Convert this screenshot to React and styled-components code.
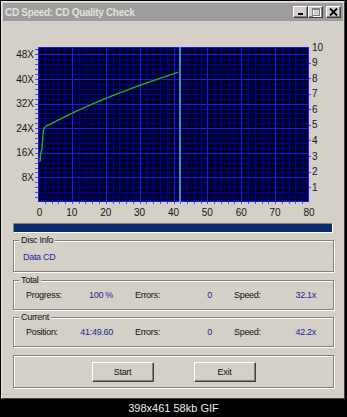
import React from "react";
import styled, { createGlobalStyle } from "styled-components";

const GlobalStyle = createGlobalStyle`
  html, body {
    margin: 0;
    padding: 0;
    background: #000;
  }
  body {
    width: 347px;
    height: 417px;
    overflow: hidden;
    font-family: "Liberation Sans", Arial, sans-serif;
  }
`;

const Screen = styled.div`
  width: 347px;
  height: 417px;
  background: #000;
  display: flex;
  flex-direction: column;
`;

const Window = styled.div`
  margin: 1px 0 0 1px;
  width: 344px;
  height: 398px;
  box-sizing: border-box;
  background: #d4d0c8;
  border: 1px solid;
  border-color: #e6e4de #404040 #404040 #e6e4de;
  padding: 1px;
  display: flex;
  flex-direction: column;
`;

const TitleBar = styled.div`
  height: 18px;
  flex: none;
  background: #9d9d9d;
  display: flex;
  align-items: center;
  padding: 0 2px;
`;

const Title = styled.div`
  flex: 1;
  font-size: 10px;
  font-weight: bold;
  letter-spacing: -0.3px;
  color: #e2e0da;
  white-space: nowrap;
`;

const TitleBtn = styled.div`
  width: 15px;
  height: 12px;
  box-sizing: border-box;
  background: #d4d0c8;
  border: 1px solid;
  border-color: #fff #404040 #404040 #fff;
  box-shadow: inset -1px -1px #808080;
  margin-left: ${p => p.$gap || 0}px;
  svg {
    display: block;
  }
`;

const Body = styled.div`
  flex: 1;
  padding: 17px 9px 0 10px;
  display: flex;
  flex-direction: column;
`;

const ChartSvg = styled.svg`
  display: block;
  flex: none;
`;

const Progress = styled.div`
  margin-top: 3px;
  width: 320px;
  height: 10px;
  box-sizing: border-box;
  border: 1px solid;
  border-color: #808080 #fff #fff #808080;
  background: #d4d0c8;
`;

const ProgressFill = styled.div`
  height: 100%;
  background: #0c2a6e;
`;

const Group = styled.fieldset`
  margin: ${p => p.$mt}px 0 0;
  padding: ${p => p.$pad};
  width: 321px;
  min-width: 0;
  box-sizing: border-box;
  border: 1px solid #808080;
  box-shadow: inset 1px 1px #fff, 1px 1px #fff;
`;

const Legend = styled.legend`
  margin-left: 5px;
  padding: 0 2px;
  font-size: 9px;
  line-height: 12px;
  letter-spacing: -0.3px;
  color: #111;
  background: #d4d0c8;
`;

const InfoLine = styled.div`
  padding-left: 9px;
  font-size: 9px;
  line-height: 12px;
  letter-spacing: -0.3px;
  color: #23239b;
`;

const StatsRow = styled.div`
  padding: 3px 0 0 12px;
  display: grid;
  grid-template-columns: 87px 77px 82px;
  column-gap: 22px;
  font-size: 9px;
  line-height: 12px;
  letter-spacing: -0.3px;
`;

const Stat = styled.div`
  display: flex;
  justify-content: space-between;
  white-space: nowrap;
`;

const StatLabel = styled.span`
  color: #111;
`;

const StatValue = styled.span`
  color: #23239b;
`;

const ButtonRow = styled.div`
  display: flex;
  justify-content: center;
  gap: 40px;
`;

const Button = styled.div`
  width: 62px;
  height: 20px;
  box-sizing: border-box;
  border: 1px solid;
  border-color: #fff #404040 #404040 #fff;
  box-shadow: inset -1px -1px #808080;
  display: flex;
  align-items: center;
  justify-content: center;
  font-size: 9px;
  letter-spacing: -0.3px;
  color: #111;
`;

const Caption = styled.div`
  flex: 1;
  padding-top: 1px;
  text-align: center;
  font-size: 11px;
  line-height: 17px;
  color: #ececec;
`;

const CW = 271;
const CH = 155;
const X0 = 25;
const Y0 = 9;
const xOf = t => X0 + (t * CW) / 80;
const yOf = v => Y0 + CH - (v * CH) / 50.4;
const px = n => Math.round(n) + 0.5;

const ramp = [
  [0.59, 13],
  [0.8, 15.8],
  [1.09, 16.8],
  [1.38, 20],
  [1.56, 23.3],
  [2.0, 24.3],
  [2.6, 24.9],
];

function curvePoints() {
  const pts = ramp.map(([t, v]) => [t, v]);
  for (let t = 3.5; t <= 41.4; t += 0.5) {
    pts.push([t, Math.sqrt(529 + 30.24 * t)]);
  }
  pts.push([41.4, 42.2]);
  return pts.map(([t, v]) => `${xOf(t).toFixed(1)},${yOf(v).toFixed(1)}`).join(" ");
}

function Chart() {
  const minorX = [];
  const majorX = [];
  for (let t = 2; t < 80; t += 2) (t % 10 === 0 ? majorX : minorX).push(t);
  const minorY = [];
  const majorY = [];
  for (let i = 1; i * 1.6 < 50.4; i++) (i % 5 === 0 ? majorY : minorY).push(i * 1.6);

  return (
    <ChartSvg width="321" height="182" viewBox="0 0 321 182">
      <rect x={X0} y={Y0} width={CW} height={CH} fill="#000024" />
      <g stroke="#000092" strokeWidth="1" shapeRendering="crispEdges">
        {minorX.map(t => (
          <line key={"mx" + t} x1={px(xOf(t))} x2={px(xOf(t))} y1={Y0} y2={Y0 + CH} />
        ))}
        {minorY.map(v => (
          <line key={"my" + v} x1={X0} x2={X0 + CW} y1={px(yOf(v))} y2={px(yOf(v))} />
        ))}
      </g>
      <g stroke="#1818f0" strokeWidth="1" shapeRendering="crispEdges">
        {majorX.map(t => (
          <line key={"Mx" + t} x1={px(xOf(t))} x2={px(xOf(t))} y1={Y0} y2={Y0 + CH} />
        ))}
        {majorY.map(v => (
          <line key={"My" + v} x1={X0} x2={X0 + CW} y1={px(yOf(v))} y2={px(yOf(v))} />
        ))}
        <rect x={X0 + 0.5} y={Y0 + 0.5} width={CW - 1} height={CH - 1} fill="none" />
      </g>
      <g stroke="#4a4aff" strokeWidth="1" shapeRendering="crispEdges">
        {[...minorY, ...majorY].map(v => (
          <line key={"tl" + v} x1={X0 - 3} x2={X0} y1={px(yOf(v))} y2={px(yOf(v))} />
        ))}
        {[...minorX, ...majorX].map(t => (
          <line key={"tb" + t} x1={px(xOf(t))} x2={px(xOf(t))} y1={Y0 + CH} y2={Y0 + CH + 2} />
        ))}
        {[1, 2, 3, 4, 5, 6, 7, 8, 9].map(n => (
          <line key={"tr" + n} x1={X0 + CW} x2={X0 + CW + 2} y1={px(164.6 - 15.55 * n)} y2={px(164.6 - 15.55 * n)} />
        ))}
      </g>
      <line x1={xOf(41.9)} x2={xOf(41.9)} y1={Y0} y2={Y0 + CH} stroke="#3c9fd0" strokeWidth="1.8" />
      <polyline points={curvePoints()} fill="none" stroke="#1fb41f" strokeWidth="1.4" />
      <g fontFamily="Liberation Sans, Arial, sans-serif" fontSize="10" fill="#151515">
        {[8, 16, 24, 32, 40, 48].map(v => (
          <text key={"yl" + v} x={21} y={yOf(v) + 3.6} textAnchor="end">
            {v}X
          </text>
        ))}
        {[1, 2, 3, 4, 5, 6, 7, 8, 9, 10].map(n => (
          <text key={"yr" + n} x={299} y={164.6 - 15.55 * n + 3.6}>
            {n}
          </text>
        ))}
        {[0, 10, 20, 30, 40, 50, 60, 70, 80].map(t => (
          <text key={"xl" + t} x={xOf(t) + (t === 0 ? 1.5 : 0)} y={177.5} textAnchor="middle">
            {t}
          </text>
        ))}
      </g>
    </ChartSvg>
  );
}

const stats = {
  total: [
    ["Progress:", "100 %"],
    ["Errors:", "0"],
    ["Speed:", "32.1x"],
  ],
  current: [
    ["Position:", "41:49.60"],
    ["Errors:", "0"],
    ["Speed:", "42.2x"],
  ],
};

function StatGroup({ title, rows, mt }) {
  return (
    <Group $mt={mt} $pad="0 0 8px">
      <Legend>{title}</Legend>
      <StatsRow>
        {rows.map(([label, value]) => (
          <Stat key={label}>
            <StatLabel>{label}</StatLabel>
            <StatValue>{value}</StatValue>
          </Stat>
        ))}
      </StatsRow>
    </Group>
  );
}

export default function App() {
  const progress = 100;
  return (
    <>
      <GlobalStyle />
      <Screen>
        <Window>
          <TitleBar>
            <Title>CD Speed: CD Quality Check</Title>
            <TitleBtn>
              <svg width="13" height="10">
                <rect x="4" y="6" width="5" height="2" fill="#000" />
              </svg>
            </TitleBtn>
            <TitleBtn>
              <svg width="13" height="10">
                <rect x="3.5" y="1.5" width="7" height="7" fill="none" stroke="#fff" transform="translate(1 1)" />
                <rect x="3.5" y="1.5" width="7" height="7" fill="none" stroke="#808080" />
                <line x1="3" x2="11" y1="2.5" y2="2.5" stroke="#808080" />
              </svg>
            </TitleBtn>
            <TitleBtn $gap={3}>
              <svg width="13" height="10">
                <path d="M3 1.5 L10 8.5 M10 1.5 L3 8.5" stroke="#000" strokeWidth="1.8" />
              </svg>
            </TitleBtn>
          </TitleBar>
          <Body>
            <Chart />
            <Progress>
              <ProgressFill style={{ width: `${progress}%` }} />
            </Progress>
            <Group $mt={1} $pad="5px 0 8px">
              <Legend>Disc Info</Legend>
              <InfoLine>Data CD</InfoLine>
            </Group>
            <StatGroup title="Total" rows={stats.total} mt={2} />
            <StatGroup title="Current" rows={stats.current} mt={1} />
            <Group $mt={8} $pad="6px 0 5px">
              <ButtonRow>
                <Button>Start</Button>
                <Button>Exit</Button>
              </ButtonRow>
            </Group>
          </Body>
        </Window>
        <Caption>398x461 58kb GIF</Caption>
      </Screen>
    </>
  );
}
